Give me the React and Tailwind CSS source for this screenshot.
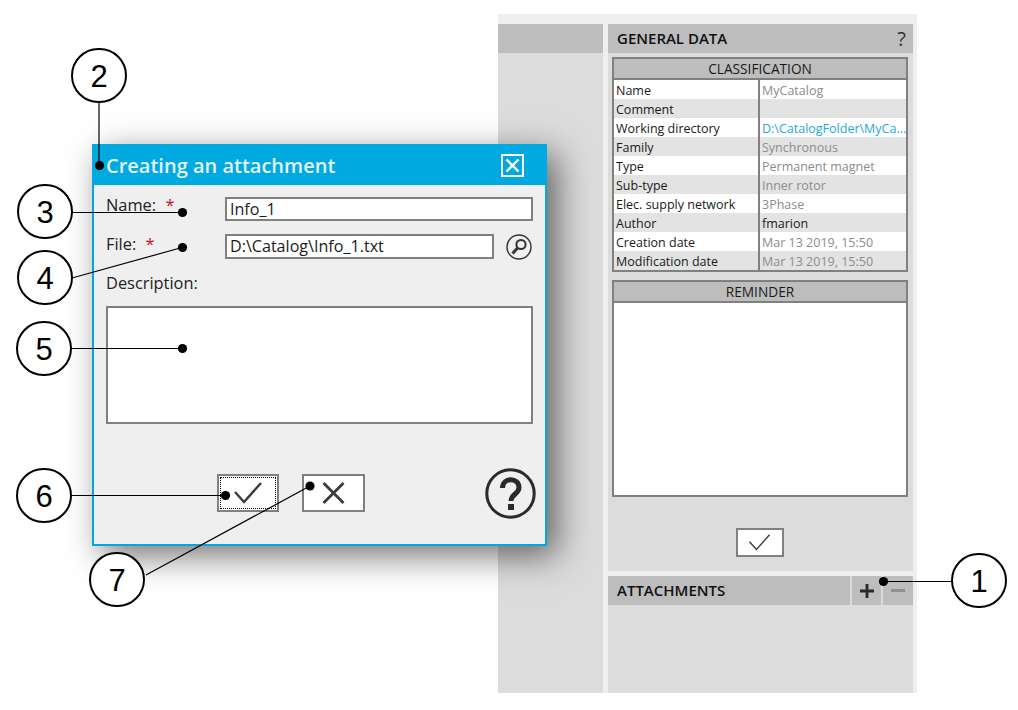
const rows = [
  ["Name", "MyCatalog", "text-[#8c8c8c]"],
  ["Comment", "", ""],
  ["Working directory", "D:\\CatalogFolder\\MyCa...", "text-[#1ea7e1]"],
  ["Family", "Synchronous", "text-[#8c8c8c]"],
  ["Type", "Permanent magnet", "text-[#8c8c8c]"],
  ["Sub-type", "Inner rotor", "text-[#8c8c8c]"],
  ["Elec. supply network", "3Phase", "text-[#8c8c8c]"],
  ["Author", "fmarion", "text-[#1a1a1a]"],
  ["Creation date", "Mar 13 2019, 15:50", "text-[#8c8c8c]"],
  ["Modification date", "Mar 13 2019, 15:50", "text-[#8c8c8c]"],
];

const Check = ({ w, h, sw }) => (
  <svg width={w} height={h} viewBox="0 0 28 22" fill="none" stroke="#3a3a3a" strokeWidth={sw}>
    <path d="M1 10 L10 20 L27 1" />
  </svg>
);

function Callout({ n, className }) {
  return (
    <div className={`absolute w-[56px] h-[55px] pt-[2px] rounded-full border-2 border-black bg-white flex items-center justify-center text-[31px] text-black leading-none ${className}`} style={{ fontFamily: '"Liberation Sans", Arial, sans-serif' }}>
      {n}
    </div>
  );
}

const Table = () => (
  <div className="ml-[4px] mr-[5px] mt-[4px] h-[215px] border-2 border-[#808080] bg-white">
    <div className="h-[19px] bg-[#bdbdbd] text-center text-[13.7px] leading-[20px] text-[#1a1a1a]">CLASSIFICATION</div>
    <div className="h-[2px] bg-[#808080]" />
    {rows.map((r, i) => (
      <div key={r[0]} className={`grid grid-cols-[146px_1fr] h-[19px] text-[12.5px] leading-[21px] ${i % 2 ? "bg-[#e3e3e3]" : "bg-white"}`}>
        <div className="pl-[2px] border-r-2 border-[#808080] text-[#1a1a1a] whitespace-nowrap">{r[0]}</div>
        <div className="pl-[2px] overflow-hidden whitespace-nowrap"><span className={r[2]}>{r[1]}</span></div>
      </div>
    ))}
  </div>
);

const inputCls = "border-2 border-[#808080] bg-white px-[3px] text-[#1a1a1a] text-[16.1px] flex items-center";

export default function App() {
  return (
    <div className="relative w-[1018px] h-[710px] bg-white overflow-hidden" style={{ fontFamily: '"Open Sans", "Noto Sans", sans-serif' }}>
      {/* Background application panel */}
      <div className="ml-[498px] mt-[14px] absolute top-0 left-0 w-[419px] h-[679px] bg-[#efefef] pt-[10px] flex gap-[5px]">
        <div className="w-[105px] h-full bg-[#dcdcdc]">
          <div className="h-[29px] bg-[#bdbdbd]" />
        </div>
        <div className="w-[305px] h-full flex flex-col gap-[5px]">
          <div className="h-[547px] bg-[#dcdcdc]">
            <div className="h-[29px] bg-[#bdbdbd] flex items-center justify-between pl-[9px] pr-[7px]">
              <span className="text-[15px] font-semibold text-[#111]">GENERAL DATA</span>
              <span className="text-[20px] text-[#333] leading-none">?</span>
            </div>
            <Table />
            <div className="ml-[4px] mr-[5px] mt-[8px] h-[217px] border-2 border-[#808080] bg-white">
              <div className="h-[19px] bg-[#bdbdbd] text-center text-[13.7px] leading-[20px] text-[#1a1a1a]">REMINDER</div>
              <div className="h-[2px] bg-[#808080]" />
            </div>
            <div className="flex justify-center mt-[31px] pr-[2px]">
              <div className="w-[48px] h-[29px] border-2 border-[#808080] bg-white flex items-center justify-center">
                <Check w={23} h={17} sw={1.8} />
              </div>
            </div>
          </div>
          <div className="flex-1 bg-[#dcdcdc]">
            <div className="h-[29px] flex gap-[2px]">
              <div className="w-[242px] bg-[#bdbdbd] pl-[9px] flex items-center text-[15px] font-semibold text-[#111]">ATTACHMENTS</div>
              <div className="w-[29px] bg-[#bdbdbd] flex items-center justify-center">
                <svg width="14" height="14" viewBox="0 0 14 14" fill="#2a2a2a"><path d="M5.6 0h2.8v5.6H14v2.8H8.4V14H5.6V8.4H0V5.6h5.6z" /></svg>
              </div>
              <div className="w-[30px] bg-[#bdbdbd] flex items-center justify-center">
                <div className="w-[14px] h-[3px] bg-[#8f8f8f]" />
              </div>
            </div>
          </div>
        </div>
      </div>

      {/* Dialog */}
      <div className="absolute left-[92px] top-[144px] w-[455px] h-[402px] border-2 border-t-0 border-[#00a9e0] bg-[#efefef] shadow-[10px_10px_32px_rgba(0,0,0,0.55)]">
        <div className="-mx-[2px] h-[41px] bg-[#00a9e0] flex items-center justify-between pl-[14px] pr-[23px]">
          <span className="text-[20px] font-semibold text-[#e3f3fa] leading-none whitespace-nowrap mt-[3px]">Creating an attachment</span>
          <svg className="mt-[1px]" width="23" height="23" viewBox="0 0 23 23" fill="none" stroke="#fff">
            <rect x="1" y="1" width="21" height="21" strokeWidth="2" />
            <path d="M5.5 5.5 L17.5 17.5 M17.5 5.5 L5.5 17.5" strokeWidth="2.4" />
          </svg>
        </div>
        <div className="pl-[12px] pt-[12px] pr-[12px] text-[16.4px] text-[#222]">
          <div className="flex h-[24px] items-center">
            <div className="w-[119px] -mt-[7px]">Name: <span className="text-[#c4121a] ml-[5px]">*</span></div>
            <div className={`${inputCls} w-[308px] h-[24px]`}>Info_1</div>
          </div>
          <div className="flex h-[25px] items-center mt-[13px]">
            <div className="w-[119px] -mt-[4px]">File: <span className="text-[#c4121a] ml-[5px]">*</span></div>
            <div className={`${inputCls} w-[269px] h-[25px]`}>D:\Catalog\Info_1.txt</div>
            <svg className="ml-[12px]" width="26" height="26" viewBox="0 0 26 26" fill="none" stroke="#333">
              <circle cx="13" cy="13" r="12" strokeWidth="1.4" />
              <circle cx="15" cy="10.5" r="4.6" strokeWidth="2" />
              <path d="M11.5 14 L6.5 19.5" strokeWidth="3" />
            </svg>
          </div>
          <div className="mt-[13px] h-[22px] leading-[22px]">Description:</div>
          <div className="mt-[12px] h-[118px] w-[427px] border-2 border-[#808080] bg-white" />
          <div className="flex mt-[50px] relative h-[38px]">
            <div className="ml-[111px] w-[62px] h-[38px] border-2 border-[#808080] bg-white flex items-center justify-center outline-1 outline-dotted outline-black -outline-offset-4">
              <Check w={28} h={22} sw={2.4} />
            </div>
            <div className="ml-[23px] w-[63px] h-[38px] border-2 border-[#808080] bg-white flex items-center justify-center">
              <svg width="23" height="22" viewBox="0 0 23 22" fill="none" stroke="#3a3a3a" strokeWidth="2.8"><path d="M1.5 1 L21.5 21 M21.5 1 L1.5 21" /></svg>
            </div>
            <svg className="absolute left-[379px] -top-[6px]" width="51" height="51" viewBox="0 0 51 51" fill="none">
              <circle cx="25.5" cy="25.5" r="23.7" stroke="#2a2a2a" strokeWidth="3" />
              <path d="M17.5 20 C17.5 9 34 9 34 19.5 C34 26 26 26 26 33" stroke="#2a2a2a" strokeWidth="5" />
              <rect x="23" y="36" width="6" height="6" fill="#2a2a2a" />
            </svg>
          </div>
        </div>
      </div>

      {/* Callout leader lines */}
      <svg className="absolute left-0 top-0 pointer-events-none" width="1018" height="710" fill="#000" stroke="#000" strokeWidth="1.2">
        <path d="M99 102 V165" fill="none" />
        <path d="M72 212.5 H182" fill="none" />
        <path d="M72 278 L182 247.5" fill="none" />
        <path d="M72 348.5 H182" fill="none" />
        <path d="M72 495.5 H226" fill="none" />
        <path d="M146 575 L310 486" fill="none" />
        <path d="M951 581.5 H883" fill="none" />
        <g stroke="none">
          <circle cx="99.5" cy="165.5" r="4.6" />
          <circle cx="182.5" cy="212.5" r="4.6" />
          <circle cx="182.5" cy="247.5" r="4.6" />
          <circle cx="182.5" cy="348.5" r="4.6" />
          <circle cx="225.5" cy="495.5" r="4.6" />
          <circle cx="310" cy="486" r="4.6" />
          <circle cx="883.5" cy="581.5" r="4.6" />
        </g>
      </svg>
      <Callout n="2" className="left-[71px] top-[48px]" />
      <Callout n="3" className="left-[17px] top-[184px]" />
      <Callout n="4" className="left-[17px] top-[250px]" />
      <Callout n="5" className="left-[16px] top-[321px]" />
      <Callout n="6" className="left-[16px] top-[468px]" />
      <Callout n="7" className="left-[89px] top-[552px]" />
      <Callout n="1" className="left-[951px] top-[553px]" />
    </div>
  );
}
